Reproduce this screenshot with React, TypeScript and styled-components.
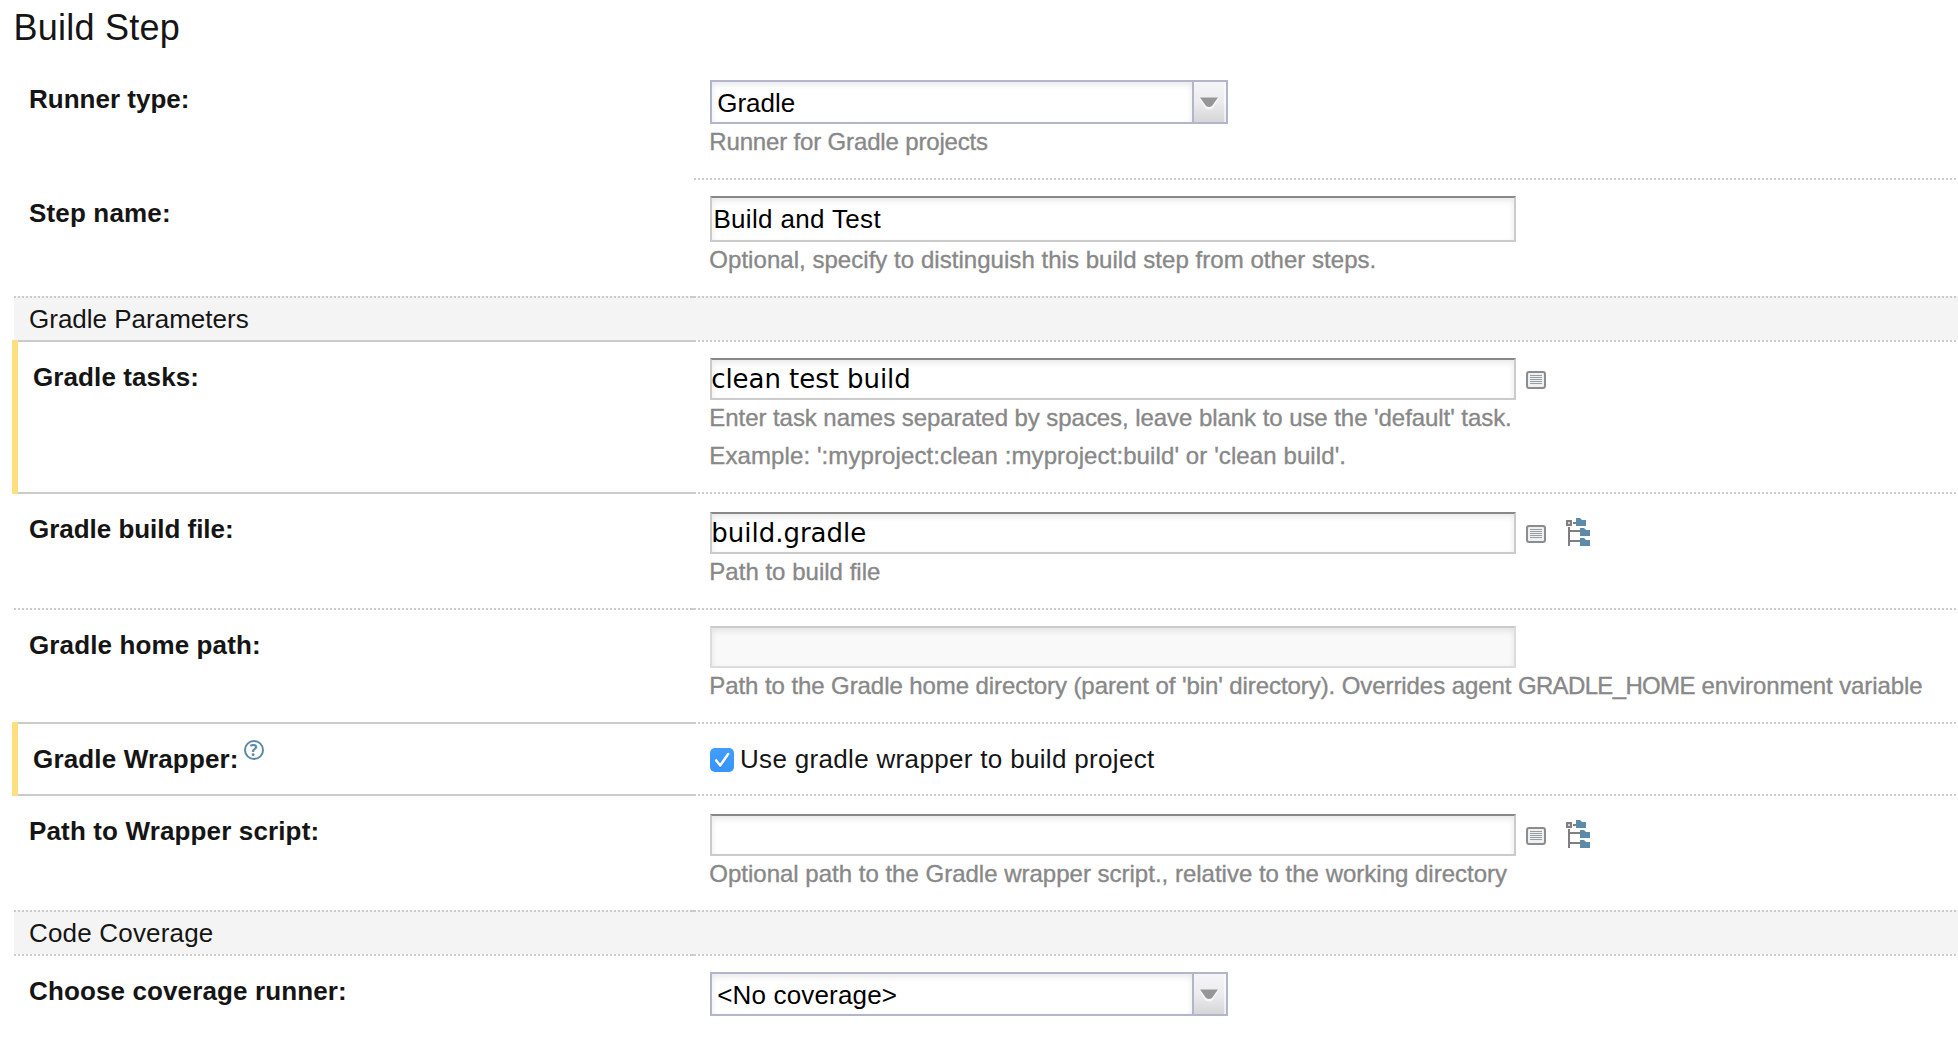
import React from 'react';
import styled, { createGlobalStyle, css } from 'styled-components';

const SANS = '"Liberation Sans", Arial, sans-serif';
const WIDE = '"DejaVu Sans", Verdana, sans-serif';
const LINE = '#cbcbcb';

const GlobalStyle = createGlobalStyle`
  * { box-sizing: border-box; }
  body {
    margin: 0;
    background: #fff;
    color: #151515;
    font-family: ${SANS};
    overflow: hidden;
  }
`;

const Page = styled.main`
  display: flex;
  flex-direction: column;
  width: 1958px;
  height: 1050px;
  padding: 7px 0 0 14px;
`;

const Title = styled.h1`
  margin: 0 0 16px -0.5px;
  font-size: 36px;
  font-weight: 400;
  line-height: 41px;
  letter-spacing: 0.25px;
`;

type RuleKind = 'value' | 'dotted' | 'solid';

const dots = (offset: number) =>
  `repeating-linear-gradient(90deg, ${offset ? `transparent 0 2px, ${LINE} 2px 4px` : `${LINE} 0 2px, transparent 2px 4px`})`;

const Rule = styled.div<{ $shaded?: boolean }>`
  display: grid;
  flex: none;
  grid-template-columns: 676px 6px 1260px;
  height: 2px;
  background: ${p => (p.$shaded ? '#f4f4f4' : 'none')};
`;

const RuleLabelPart = styled.span<{ $kind: RuleKind }>`
  background: ${p => (p.$kind === 'value' ? 'none' : p.$kind === 'solid' ? LINE : dots(0))};
`;

const RuleJoint = styled.span<{ $kind: RuleKind }>`
  background: ${p => (p.$kind === 'value' ? `linear-gradient(90deg, transparent 4px, ${LINE} 4px)` : LINE)};
`;

const RuleValuePart = styled.span`
  background: ${dots(2)};
`;

function Divider({ kind = 'dotted', shaded }: { kind?: RuleKind; shaded?: boolean }) {
  return (
    <Rule $shaded={shaded}>
      <RuleLabelPart $kind={kind} />
      <RuleJoint $kind={kind} />
      <RuleValuePart />
    </Rule>
  );
}

const Row = styled.div<{ $height: number }>`
  display: grid;
  flex: none;
  grid-template-columns: 680px 1fr;
  height: ${p => p.$height}px;
`;

const LabelCell = styled.div<{ $changed?: boolean; $raised?: boolean }>`
  display: flex;
  align-items: flex-start;
  padding: ${p => (p.$raised ? 18 : 20)}px 0 0 15px;
  ${p =>
    p.$changed &&
    css`
      position: relative;
      z-index: 1;
      margin: -2px 0 -2px -2px;
      padding: 22px 0 0 15px;
      border-left: 6px solid #ffdf80;
    `}
`;

const Label = styled.label<{ $tracking: number }>`
  font-size: 26px;
  font-weight: 700;
  line-height: 30px;
  letter-spacing: ${p => p.$tracking}px;
  white-space: nowrap;
`;

const ValueCell = styled.div<{ $top?: number }>`
  display: flex;
  flex-direction: column;
  align-items: flex-start;
  padding: ${p => p.$top ?? 16}px 0 0 16px;
`;

const Section = styled.h2<{ $tracking: number }>`
  flex: none;
  height: 42px;
  margin: 0;
  padding: 6px 0 0 15px;
  background: #f4f4f4;
  font-size: 26px;
  font-weight: 400;
  line-height: 30px;
  letter-spacing: ${p => p.$tracking}px;
`;

const Hint = styled.p<{ $tracking: number; $next?: boolean }>`
  margin: ${p => (p.$next ? 11 : 4)}px 0 0 -0.7px;
  color: #888;
  font-size: 24px;
  line-height: 27px;
  letter-spacing: ${p => p.$tracking}px;
  white-space: nowrap;
  -webkit-text-stroke: 0.35px #888;
`;

const VariableName = styled.span`
  letter-spacing: -0.65px;
`;

const FieldLine = styled.div`
  display: flex;
  align-items: flex-start;
`;

const TextField = styled.input<{ $wide?: boolean; $tall?: boolean; $tracking?: number }>`
  width: 806px;
  height: ${p => (p.$tall ? 46 : 42)}px;
  padding: 0 0 0 ${p => (p.$tall ? 1.4 : 0)}px;
  border: 2px solid ${LINE};
  border-top-color: #888;
  border-radius: 0;
  outline: none;
  background: #fff;
  box-shadow: inset 0 3px 6px rgba(0, 0, 0, 0.09);
  color: #000;
  font-family: ${p => (p.$wide ? WIDE : SANS)};
  font-size: 26px;
  line-height: 30px;
  letter-spacing: ${p => p.$tracking ?? 0}px;
  text-indent: ${p => (p.$wide ? -0.8 : 0)}px;

  &:disabled {
    border-color: #dcdcdc;
    border-top-color: ${LINE};
    background: #f9f9f9;
  }
`;

const Combo = styled.div`
  display: grid;
  grid-template-columns: 480px 34px;
  width: 518px;
  height: 44px;
  border: 2px solid #b3b5ca;
`;

const ComboValue = styled.span<{ $tracking: number }>`
  padding: 6px 0 0 5.2px;
  box-shadow: inset 0 3px 6px rgba(0, 0, 0, 0.09);
  color: #000;
  font-size: 26px;
  line-height: 30px;
  letter-spacing: ${p => p.$tracking}px;
`;

const ComboButton = styled.span`
  display: flex;
  align-items: center;
  justify-content: center;
  padding: 2px 2px 0 0;
  border-left: 2px solid #b3b5ca;
  background: linear-gradient(#f5f5f8, #ececef 50%, #d6d6d9);
  box-shadow: inset -2px 0 0 rgba(255, 255, 255, 0.55);
`;

const IconSlot = styled.span<{ $top: number; $gap: number }>`
  display: block;
  flex: none;
  margin: ${p => p.$top}px 0 0 ${p => p.$gap}px;
  line-height: 0;
`;

const Help = styled.span`
  display: flex;
  align-items: center;
  justify-content: center;
  width: 20px;
  height: 20px;
  margin: -4px 0 0 5px;
  border: 2px solid #5b8ba8;
  border-radius: 50%;
  color: #5b8ba8;
  font: 700 16px/16px "Open Sans", sans-serif;
`;

const CheckLine = styled.label`
  display: flex;
  align-items: flex-start;
  font-size: 26px;
  line-height: 30px;
  letter-spacing: 0.324px;
`;

const CheckBox = styled.span`
  display: block;
  width: 24px;
  height: 24px;
  margin: 4px 6px 0 0;
  border-radius: 5px;
  background: linear-gradient(#419dfd, #3795fb);
  line-height: 0;
`;

function Select({ value, tracking }: { value: string; tracking: number }) {
  return (
    <Combo role="combobox">
      <ComboValue $tracking={tracking}>{value}</ComboValue>
      <ComboButton>
        <svg width="22" height="14" viewBox="0 0 22 14">
          <path d="M1 2h20l-6.5 10.5q-3.5 2-7 0z" fill="#fff" opacity="0.65" />
          <path d="M2 1.5h18l-6 8.5q-3 2-6 0z" fill="#95969a" />
        </svg>
      </ComboButton>
    </Combo>
  );
}

function ListIcon() {
  return (
    <IconSlot $top={13} $gap={10}>
      <svg width="20" height="18" viewBox="0 0 20 18">
        <rect x="1" y="1" width="18" height="16" rx="2" fill="#edf1f3" stroke="#8c8c8c" strokeWidth="2" />
        <path d="M4 4.5h12M4 6.5h12M4 8.5h12M4 10.5h12M4 12.5h12" stroke="#999da0" strokeWidth="1" />
      </svg>
    </IconSlot>
  );
}

function TreeIcon() {
  return (
    <IconSlot $top={6} $gap={20}>
      <svg width="24" height="28" viewBox="0 0 24 28">
        <rect x="1" y="3" width="4" height="4" fill="#d5d5d5" stroke="#7f7f7f" strokeWidth="2" />
        <path d="M7 5h3M3 9v19M3 13h11M3 23h11" fill="none" stroke="#7f7f7f" strokeWidth="2" />
        <path d="M10 0h4l2 2h4v6H10zM14 10h4l2 2h4v6H14zM14 20h4l2 2h4v6H14z" fill="#5b8ba8" />
      </svg>
    </IconSlot>
  );
}

export default function App() {
  return (
    <>
      <GlobalStyle />
      <Page>
        <Title>Build Step</Title>

        <Row $height={114}>
          <LabelCell><Label $tracking={0.01}>Runner type:</Label></LabelCell>
          <ValueCell>
            <Select value="Gradle" tracking={0.02} />
            <Hint $tracking={-0.16}>Runner for Gradle projects</Hint>
          </ValueCell>
        </Row>
        <Divider kind="value" />

        <Row $height={116}>
          <LabelCell $raised><Label $tracking={0.16}>Step name:</Label></LabelCell>
          <ValueCell>
            <TextField $tall $tracking={0.338} defaultValue="Build and Test" />
            <Hint $tracking={0.04}>Optional, specify to distinguish this build step from other steps.</Hint>
          </ValueCell>
        </Row>
        <Divider shaded />

        <Section $tracking={0}>Gradle Parameters</Section>
        <Divider kind="solid" />

        <Row $height={150}>
          <LabelCell $changed><Label $tracking={0.1}>Gradle tasks:</Label></LabelCell>
          <ValueCell>
            <FieldLine>
              <TextField $wide $tracking={-0.05} defaultValue="clean test build" />
              <ListIcon />
            </FieldLine>
            <Hint $tracking={-0.06}>Enter task names separated by spaces, leave blank to use the 'default' task.</Hint>
            <Hint $next $tracking={0.1}>Example: ':myproject:clean :myproject:build' or 'clean build'.</Hint>
          </ValueCell>
        </Row>
        <Divider kind="solid" />

        <Row $height={114}>
          <LabelCell><Label $tracking={-0.03}>Gradle build file:</Label></LabelCell>
          <ValueCell $top={18}>
            <FieldLine>
              <TextField $wide defaultValue="build.gradle" />
              <ListIcon />
              <TreeIcon />
            </FieldLine>
            <Hint $tracking={0.016}>Path to build file</Hint>
          </ValueCell>
        </Row>
        <Divider />

        <Row $height={112}>
          <LabelCell><Label $tracking={0.12}>Gradle home path:</Label></LabelCell>
          <ValueCell>
            <TextField disabled />
            <Hint $tracking={-0.08}>
              Path to the Gradle home directory (parent of 'bin' directory). Overrides agent{' '}
              <VariableName>GRADLE_HOME</VariableName> environment variable
            </Hint>
          </ValueCell>
        </Row>
        <Divider kind="solid" />

        <Row $height={70}>
          <LabelCell $changed>
            <Label $tracking={0.16}>Gradle Wrapper:</Label>
            <Help>?</Help>
          </LabelCell>
          <ValueCell $top={20}>
            <CheckLine>
              <CheckBox role="checkbox" aria-checked="true">
                <svg width="24" height="24" viewBox="0 0 24 24" fill="none" strokeLinecap="round" strokeLinejoin="round">
                  <path d="M6.2 13.5l4 5.2 8-11.6" stroke="#2476cf" strokeWidth="2.4" opacity="0.6" />
                  <path d="M6.2 12.4l4 5.2 8-11.6" stroke="#fff" strokeWidth="2.5" />
                </svg>
              </CheckBox>
              Use gradle wrapper to build project
            </CheckLine>
          </ValueCell>
        </Row>
        <Divider kind="solid" />

        <Row $height={114}>
          <LabelCell><Label $tracking={0.14}>Path to Wrapper script:</Label></LabelCell>
          <ValueCell $top={18}>
            <FieldLine>
              <TextField $wide />
              <ListIcon />
              <TreeIcon />
            </FieldLine>
            <Hint $tracking={0}>Optional path to the Gradle wrapper script., relative to the working directory</Hint>
          </ValueCell>
        </Row>
        <Divider shaded />

        <Section $tracking={0.18}>Code Coverage</Section>
        <Divider />

        <Row $height={92}>
          <LabelCell><Label $tracking={0.12}>Choose coverage runner:</Label></LabelCell>
          <ValueCell>
            <Select value="<No coverage>" tracking={0.17} />
          </ValueCell>
        </Row>
      </Page>
    </>
  );
}
